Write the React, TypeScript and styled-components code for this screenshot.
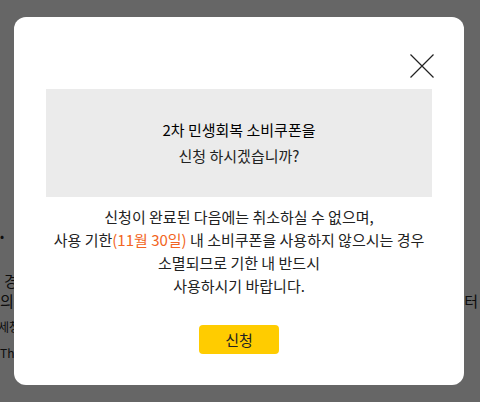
import { createGlobalStyle, styled } from "styled-components";

const GlobalStyle = createGlobalStyle`
  * {
    box-sizing: border-box;
  }
  html, body {
    margin: 0;
    padding: 0;
    background: #fff;
    font-family: "Noto Sans CJK KR", "Noto Sans", sans-serif;
    color: #222;
  }
`;

const App = () => {
  return (
    <>
      <GlobalStyle />
      <Page>
        <BgRow $top={226} $size={12}>
          <span>•</span>
        </BgRow>
        <BgRow $top={25} $size={15} $shift={4}>
          <span>경</span>
        </BgRow>
        <BgRow $top={0} $size={15} $shift={0}>
          <span>의</span>
          <span>터</span>
        </BgRow>
        <BgRow $top={6} $size={12} $shift={-2}>
          <span>세청</span>
        </BgRow>
        <BgRow $top={6} $size={12} $shift={0}>
          <span>Th</span>
        </BgRow>
      </Page>

      <Overlay>
        <Modal role="dialog" aria-modal="true">
          <CloseRow>
            <CloseButton type="button" aria-label="닫기">
              <svg width="24" height="24" viewBox="0 0 24 24" fill="none">
                <path d="M0.5 0.5L23.5 23.5M23.5 0.5L0.5 23.5" stroke="#222" strokeWidth="1.2" />
              </svg>
            </CloseButton>
          </CloseRow>

          <QuestionBox>
            <QuestionTitle>2차 민생회복 소비쿠폰을</QuestionTitle>
            <QuestionText>신청 하시겠습니까?</QuestionText>
          </QuestionBox>

          <Notice>
            신청이 완료된 다음에는 취소하실 수 없으며,
            <br />
            사용 기한<Highlight>(11월 30일)</Highlight> 내 소비쿠폰을 사용하지 않으시는 경우
            <br />
            소멸되므로 기한 내 반드시
            <br />
            사용하시기 바랍니다.
          </Notice>

          <ButtonRow>
            <SubmitButton type="button">신청</SubmitButton>
          </ButtonRow>
        </Modal>
      </Overlay>
    </>
  );
};

export default App;

const Page = styled.div`
  width: 480px;
  height: 402px;
  overflow: hidden;
`;

const BgRow = styled.div<{ $top: number; $size: number; $shift?: number }>`
  display: flex;
  justify-content: space-between;
  margin-top: ${(p) => p.$top}px;
  margin-left: ${(p) => p.$shift ?? 0}px;
  margin-right: 2px;
  font-size: ${(p) => p.$size}px;
  line-height: 20px;
  color: #222;
`;

const Overlay = styled.div`
  position: fixed;
  inset: 0;
  background: rgba(0, 0, 0, 0.6);
  display: flex;
  align-items: center;
  justify-content: center;
`;

const Modal = styled.div`
  width: 450px;
  height: 368px;
  margin-left: -2px;
  background: #fff;
  border-radius: 12px;
  padding: 37px 32px 0;
  display: flex;
  flex-direction: column;
`;

const CloseRow = styled.div`
  display: flex;
  justify-content: flex-end;
  margin-right: -2px;
  height: 24px;
`;

const CloseButton = styled.button`
  border: 0;
  padding: 0;
  background: none;
  width: 24px;
  height: 24px;
  cursor: pointer;

  svg {
    display: block;
  }
`;

const QuestionBox = styled.div`
  margin-top: 11px;
  height: 108px;
  background: #ebebeb;
  display: flex;
  flex-direction: column;
  align-items: center;
  justify-content: center;
  text-align: center;
  font-size: 15px;
  line-height: 26px;
  color: #222;
`;

const QuestionTitle = styled.p`
  margin: 0;
  color: #000;
`;

const QuestionText = styled.p`
  margin: 0;
`;

const Notice = styled.p`
  margin: 8px 0 0;
  text-align: center;
  font-size: 15px;
  line-height: 23px;
  color: #222;
`;

const Highlight = styled.span`
  color: #f26522;
`;

const ButtonRow = styled.div`
  display: flex;
  justify-content: center;
  margin-top: 28px;
`;

const SubmitButton = styled.button`
  width: 80px;
  height: 29px;
  border: 0;
  border-radius: 4px;
  background: #ffcc00;
  color: #222;
  font-family: "Noto Sans CJK KR", "Noto Sans", sans-serif;
  font-size: 15px;
  font-weight: 400;
  cursor: pointer;
`;
